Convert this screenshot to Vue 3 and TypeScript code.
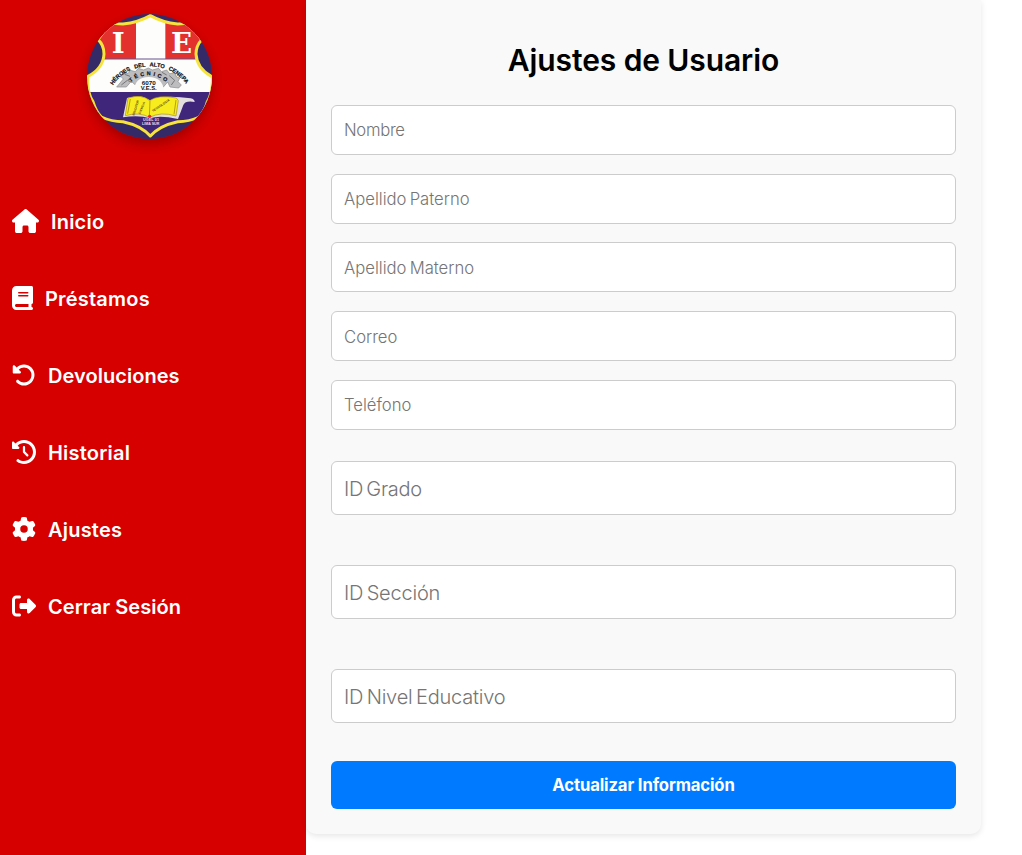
<script setup lang="ts">
interface NavItem {
  key: string
  label: string
  width: number
  path: string
}

interface Field {
  key: string
  label: string
}

const navItems: NavItem[] = [
  {
    key: 'inicio',
    label: 'Inicio',
    width: 576,
    path: 'M575.8 255.5c0 18-15 32.1-32 32.1h-32l.7 160.2c0 2.7-.2 5.4-.5 8.1V472c0 22.1-17.9 40-40 40H456c-1.1 0-2.2 0-3.3-.1c-1.4 .1-2.8 .1-4.2 .1H416 392c-22.1 0-40-17.9-40-40V448 384c0-17.7-14.3-32-32-32H256c-17.7 0-32 14.3-32 32v64 24c0 22.1-17.9 40-40 40H160 128.1c-1.5 0-3-.1-4.5-.2c-1.2 .1-2.4 .2-3.6 .2H104c-22.1 0-40-17.9-40-40V360c0-.9 0-1.9 .1-2.8V287.6H32c-18 0-32-14-32-32.1c0-9 3-17 10-24L266.4 8c7-7 15-8 22-8s15 2 21 7L564.8 231.5c8 7 12 15 11 24z',
  },
  {
    key: 'prestamos',
    label: 'Préstamos',
    width: 448,
    path: 'M96 0C43 0 0 43 0 96V416c0 53 43 96 96 96H384h32c17.7 0 32-14.3 32-32s-14.3-32-32-32V384c17.7 0 32-14.3 32-32V32c0-17.7-14.3-32-32-32H384 96zm0 384H352v64H96c-17.7 0-32-14.3-32-32s14.3-32 32-32zm32-240c0-8.8 7.2-16 16-16H336c8.8 0 16 7.2 16 16s-7.2 16-16 16H144c-8.8 0-16-7.2-16-16zm16 48H336c8.8 0 16 7.2 16 16s-7.2 16-16 16H144c-8.8 0-16-7.2-16-16s7.2-16 16-16z',
  },
  {
    key: 'devoluciones',
    label: 'Devoluciones',
    width: 512,
    path: 'M48.5 224H40c-13.3 0-24-10.7-24-24V72c0-9.7 5.8-18.5 14.8-22.2s19.3-1.7 26.2 5.2L98.6 96.6c87.6-86.5 228.7-86.2 315.8 1c87.5 87.5 87.5 229.3 0 316.8s-229.3 87.5-316.8 0c-12.5-12.5-12.5-32.8 0-45.3s32.8-12.5 45.3 0c62.5 62.5 163.8 62.5 226.3 0s62.5-163.8 0-226.3c-62.2-62.2-162.7-62.5-225.3-1L185 183c6.9 6.9 8.9 17.2 5.2 26.2s-12.5 14.8-22.2 14.8H48.5z',
  },
  {
    key: 'historial',
    label: 'Historial',
    width: 512,
    path: 'M75 75L41 41C25.9 25.9 0 36.6 0 57.9V168c0 13.3 10.7 24 24 24H134.1c21.4 0 32.1-25.9 17-41l-30.8-30.8C155 85.5 203 64 256 64c106 0 192 86 192 192s-86 192-192 192c-40.8 0-78.6-12.7-109.7-34.4c-14.5-10.1-34.4-6.6-44.6 7.9s-6.6 34.4 7.9 44.6C151.2 495 201.7 512 256 512c141.4 0 256-114.6 256-256S397.4 0 256 0C185.3 0 121.3 28.7 75 75zm181 53c-13.3 0-24 10.7-24 24V256c0 6.4 2.5 12.5 7 17l72 72c9.4 9.4 24.6 9.4 33.9 0s9.4-24.6 0-33.9l-65-65V152c0-13.3-10.7-24-24-24z',
  },
  {
    key: 'ajustes',
    label: 'Ajustes',
    width: 512,
    path: 'M495.9 166.6c3.2 8.7 .5 18.4-6.4 24.6l-43.3 39.4c1.1 8.3 1.7 16.8 1.7 25.4s-.6 17.1-1.7 25.4l43.3 39.4c6.9 6.2 9.6 15.9 6.4 24.6c-4.4 11.9-9.7 23.3-15.8 34.3l-4.7 8.1c-6.6 11-14 21.4-22.1 31.2c-5.9 7.2-15.7 9.6-24.5 6.8l-55.7-17.7c-13.4 10.3-28.2 18.9-44 25.4l-12.5 57.1c-2 9.1-9 16.3-18.2 17.8c-13.8 2.3-28 3.5-42.5 3.5s-28.7-1.2-42.5-3.5c-9.2-1.5-16.2-8.7-18.2-17.8l-12.5-57.1c-15.8-6.5-30.6-15.1-44-25.4L83.1 425.9c-8.8 2.8-18.6 .3-24.5-6.8c-8.1-9.8-15.5-20.2-22.1-31.2l-4.7-8.1c-6.1-11-11.4-22.4-15.8-34.3c-3.2-8.7-.5-18.4 6.4-24.6l43.3-39.4C64.6 273.1 64 264.6 64 256s.6-17.1 1.7-25.4L22.4 191.2c-6.9-6.2-9.6-15.9-6.4-24.6c4.4-11.9 9.7-23.3 15.8-34.3l4.7-8.1c6.6-11 14-21.4 22.1-31.2c5.9-7.2 15.7-9.6 24.5-6.8l55.7 17.7c13.4-10.3 28.2-18.9 44-25.4l12.5-57.1c2-9.1 9-16.3 18.2-17.8C227.3 1.2 241.5 0 256 0s28.7 1.2 42.5 3.5c9.2 1.5 16.2 8.7 18.2 17.8l12.5 57.1c15.8 6.5 30.6 15.1 44 25.4l55.7-17.7c8.8-2.8 18.6-.3 24.5 6.8c8.1 9.8 15.5 20.2 22.1 31.2l4.7 8.1c6.1 11 11.4 22.4 15.8 34.3zM256 336a80 80 0 1 0 0-160 80 80 0 1 0 0 160z',
  },
  {
    key: 'cerrar',
    label: 'Cerrar Sesión',
    width: 512,
    path: 'M377.9 105.9L500.7 228.7c7.2 7.2 11.3 17.1 11.3 27.3s-4.1 20.1-11.3 27.3L377.9 406.1c-6.4 6.4-15 9.9-24 9.9c-18.7 0-33.9-15.2-33.9-33.9l0-62.1-128 0c-17.7 0-32-14.3-32-32l0-64c0-17.7 14.3-32 32-32l128 0 0-62.1c0-18.7 15.2-33.9 33.9-33.9c9 0 17.6 3.6 24 9.9zM160 96L96 96c-17.7 0-32 14.3-32 32l0 256c0 17.7 14.3 32 32 32l64 0c17.7 0 32 14.3 32 32s-14.3 32-32 32l-64 0c-53 0-96-43-96-96L0 128C0 75 43 32 96 32l64 0c17.7 0 32 14.3 32 32s-14.3 32-32 32z',
  },
]

const personalFields: Field[] = [
  { key: 'nombre', label: 'Nombre' },
  { key: 'paterno', label: 'Apellido Paterno' },
  { key: 'materno', label: 'Apellido Materno' },
  { key: 'correo', label: 'Correo' },
  { key: 'telefono', label: 'Teléfono' },
]

const schoolFields: Field[] = [
  { key: 'grado', label: 'ID Grado' },
  { key: 'seccion', label: 'ID Sección' },
  { key: 'nivel', label: 'ID Nivel Educativo' },
]

const shield =
  'M227 32Q190 53 145 57Q120 57 105 53L70 104Q88 120 88 147Q86 190 40 214Q36 262 55 290Q64 320 80 336Q110 350 145 350Q200 362 227 393Q254 362 309 350Q344 350 374 336Q390 320 398 290Q415 262 413 216Q366 190 364 147Q364 122 381 104L346 53Q331 57 309 57Q264 53 227 32Z'
</script>

<template>
  <div class="page">
    <aside class="sidebar">
      <svg class="crest" viewBox="37 27 375 375" role="img" aria-label="I.E. 6070">
        <defs>
          <clipPath id="shield">
            <path :d="shield" />
          </clipPath>
          <path id="arc-outer" d="M115 241Q150 186 225 184Q300 186 337 241" />
          <path id="arc-inner" d="M168 232Q190 211 222 211Q252 211 279 235" />
        </defs>
        <rect x="37" y="27" width="375" height="375" fill="#352a68" />
        <g clip-path="url(#shield)">
          <rect x="37" y="27" width="375" height="375" fill="#fdfdfb" />
          <rect x="37" y="27" width="147" height="135" fill="#e3312d" />
          <rect x="272" y="27" width="140" height="135" fill="#e3312d" />
          <path d="M37 162H412" stroke="#66528c" stroke-width="3" />
          <rect x="37" y="261" width="375" height="141" fill="#40267a" />
        </g>
        <path class="shield-line" :d="shield" />
        <text class="initial" x="131" y="143">I</text>
        <text class="initial" x="321" y="143">E</text>

        <path class="gear" d="M126 246L146 222L137 213L147 203L160 206L167 196L182 200L191 190L207 195L221 189L233 195L252 190L260 200L276 195L285 206L300 204L306 216L315 219L310 230L320 240L312 249L286 246L279 231L266 246Q225 204 181 239L170 229L155 246Z" />
        <path class="gear-shade" d="M140 240L158 226L172 232M290 240L300 226L284 212M150 208L166 214M262 202L276 210" />
        <path class="hub" d="M178 258Q180 216 222 216Q264 216 268 258Z" />
        <text class="arc-text"><textPath href="#arc-outer" textLength="255">HÉROES DEL ALTO CENEPA</textPath></text>
        <text class="arc-text small"><textPath href="#arc-inner" textLength="116">TÉCNICO</textPath></text>
        <text class="code" x="222" y="240" textLength="42" lengthAdjust="spacingAndGlyphs">6070</text>
        <text class="code" x="222" y="254" textLength="48" lengthAdjust="spacingAndGlyphs">V.E.S.</text>

        <path d="M145 337L157 279Q199 267 226 286Q265 268 348 280Q360 283 360 291Q332 286 326 300L310 342Q255 330 226 340Q193 330 145 337Z" fill="#e4dfdf" />
        <path class="book" d="M160 279Q202 266 225 287Q250 268 305 279L311 287L304 333Q258 319 225 337Q193 320 152 332Z" />
        <path d="M167 282L159 326M226 288L224 335M304 285L298 328" stroke="#a99212" stroke-width="2.5" fill="none" />
        <text class="book-text" transform="translate(179 332) rotate(-73)" textLength="47">EDUCATION</text>
        <text class="book-text" transform="translate(197 328) rotate(-68)" textLength="38">CIENCIA</text>
        <text class="book-text" transform="translate(235 321) rotate(-34)" textLength="61">TECNOLOGIA</text>
        <circle cx="225" cy="334" r="5" fill="#e62926" />
        <text class="caption" x="229" y="348" textLength="48">UGEL 01</text>
        <text class="caption" x="228" y="361" textLength="52">LIMA SUR</text>
      </svg>

      <nav class="nav">
        <a v-for="item in navItems" :key="item.key" class="nav-link" :class="item.key">
          <svg class="nav-icon" :viewBox="`0 0 ${item.width} 512`" aria-hidden="true">
            <path :d="item.path" fill="currentColor" />
          </svg>
          <span class="nav-label">{{ item.label }}</span>
        </a>
      </nav>
    </aside>

    <main class="card">
      <h1 class="title">Ajustes de Usuario</h1>
      <form class="form" @submit.prevent>
        <input
          v-for="field in personalFields"
          :key="field.key"
          class="input"
          :class="field.key"
          type="text"
          :placeholder="field.label"
        />
        <div class="school">
          <input
            v-for="field in schoolFields"
            :key="field.key"
            class="input large"
            :class="field.key"
            type="text"
            :placeholder="field.label"
          />
        </div>
        <button class="submit" type="submit">Actualizar Información</button>
      </form>
    </main>
  </div>
</template>

<style>
body {
  margin: 0;
  background: #fff;
}
</style>

<style scoped>
.page {
  display: flex;
  align-items: flex-start;
  height: 855px;
  overflow: hidden;
  font-family: Inter, 'Open Sans', sans-serif;
}

.sidebar {
  box-sizing: border-box;
  flex: none;
  display: flex;
  flex-direction: column;
  width: 306px;
  height: 855px;
  padding-top: 14px;
  background: #d60000;
}

.crest {
  display: block;
  width: 125px;
  height: 125px;
  margin-left: 87px;
  border-radius: 50%;
  box-shadow: 0 5px 12px rgba(0, 0, 0, 0.25);
}

.shield-line {
  fill: none;
  stroke: #f6e33b;
  stroke-width: 9;
  stroke-linejoin: round;
}

.initial {
  font: 700 83px 'DejaVu Serif', serif;
  fill: #fff;
  text-anchor: middle;
}

.gear {
  fill: #bdbdbf;
  stroke: #88888b;
  stroke-width: 2;
}

.gear-shade {
  fill: none;
  stroke: #77777a;
  stroke-width: 3;
}

.hub {
  fill: #fbfbfa;
}

.arc-text {
  font: 700 17px 'Liberation Sans', sans-serif;
  fill: #111;
  stroke: #111;
  stroke-width: 0.6;
  word-spacing: 8px;
}

.arc-text.small {
  font-size: 16px;
}

.code {
  font: 700 15px 'Liberation Sans', sans-serif;
  fill: #111;
  text-anchor: middle;
}

.book {
  fill: #f7ec1d;
  stroke: #a99212;
  stroke-width: 2;
}

.book-text {
  font: 700 9px 'Liberation Sans', sans-serif;
  fill: #4c4519;
}

.caption {
  font: 700 11px 'Liberation Sans', sans-serif;
  fill: #e4deed;
  text-anchor: middle;
}

.nav {
  display: flex;
  flex-direction: column;
  gap: 53px;
  margin-top: 70px;
  padding-left: 12px;
}

.nav-link {
  display: flex;
  align-items: center;
  gap: 12px;
  height: 24px;
  color: #fff;
}

.nav-icon {
  display: block;
  flex: none;
  height: 24px;
}

.nav-label {
  padding-top: 2px;
  font-size: 20px;
  font-weight: 600;
  line-height: 24px;
  letter-spacing: 0.2px;
  white-space: nowrap;
}

.devoluciones .nav-label,
.cerrar .nav-label {
  letter-spacing: 0.05px;
}

.card {
  box-sizing: border-box;
  flex: none;
  width: 675px;
  height: 834px;
  padding: 40px 25px 25px;
  background: #f9f9f9;
  border-radius: 0 0 10px 10px;
  box-shadow: 0 2px 6px rgba(0, 0, 0, 0.1);
}

.title {
  margin: 0 0 25px;
  font-size: 30px;
  font-weight: 600;
  line-height: 40px;
  letter-spacing: -0.1px;
  text-align: center;
  color: #000;
}

.form {
  display: flex;
  flex-direction: column;
  gap: 18.7px;
}

.input {
  box-sizing: border-box;
  width: 100%;
  height: 50px;
  padding: 0 12px;
  border: 1px solid #ccc;
  border-radius: 6px;
  background: #fff;
  font-family: inherit;
  font-size: 16.67px;
  font-weight: 300;
  letter-spacing: 0;
  word-spacing: -1.5px;
  outline: none;
}

.input::placeholder {
  color: #757575;
  opacity: 1;
}

.input.nombre {
  letter-spacing: -0.3px;
}

.input.materno,
.input.correo {
  padding-top: 2px;
}

.school {
  display: flex;
  flex-direction: column;
  gap: 50px;
  margin: 12.5px 0 19.3px;
}

.input.large {
  height: 54px;
  padding-top: 2px;
  font-size: 20px;
  letter-spacing: -0.2px;
  word-spacing: -2px;
}

.input.large.grado {
  letter-spacing: -0.3px;
}

.submit {
  height: 48px;
  padding: 0;
  border: 0;
  border-radius: 6px;
  background: #007bff;
  color: #fff;
  font-family: inherit;
  font-size: 16.67px;
  font-weight: 700;
  letter-spacing: -0.13px;
}
</style>
